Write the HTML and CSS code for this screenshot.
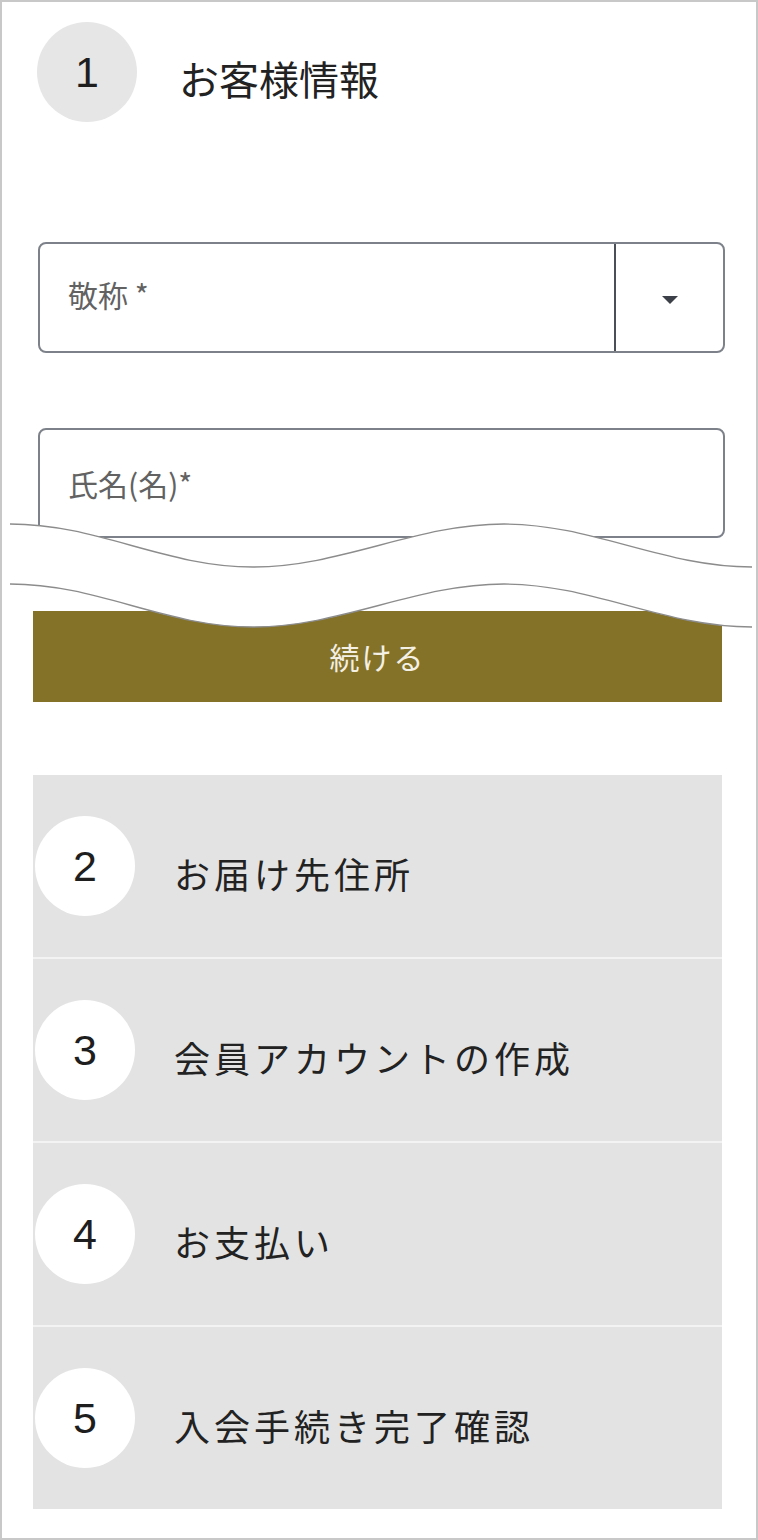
FILE: index.html
```html
<!DOCTYPE html>
<html lang="ja">
<head>
<meta charset="utf-8">
<title>お客様情報</title>
<link rel="stylesheet" href="styles.css">
</head>
<body>
<div class="frame">
  <div class="step-head">
    <div class="num num-current">1</div>
    <div class="step-title">お客様情報</div>
  </div>

  <form class="fields">
    <div class="field select">
      <span class="label">敬称 *</span>
      <span class="select-btn"><span class="caret"></span></span>
    </div>
    <div class="field input">
      <span class="label">氏名(名)*</span>
    </div>
  </form>

  <svg class="wave" width="758" height="140" viewBox="0 0 758 140" aria-hidden="true">
    <path d="M8 24 C96 24 163 67 251 67 C339 67 414 24 502 24 C590 24 661 67 750 67 L750 127 C661 127 590 84 502 84 C414 84 339 127 251 127 C163 127 96 84 8 84 Z" fill="#ffffff"/>
    <path d="M8 24 C96 24 163 67 251 67 C339 67 414 24 502 24 C590 24 661 67 750 67" fill="none" stroke="#8c8c8c" stroke-width="1.3"/>
    <path d="M8 84 C96 84 163 127 251 127 C339 127 414 84 502 84 C590 84 661 127 750 127" fill="none" stroke="#8c8c8c" stroke-width="1.3"/>
  </svg>

  <button class="continue" type="button">続ける</button>

  <ol class="steps">
    <li class="step"><span class="num">2</span><span class="step-name">お届け先住所</span></li>
    <li class="step"><span class="num">3</span><span class="step-name">会員アカウントの作成</span></li>
    <li class="step"><span class="num">4</span><span class="step-name">お支払い</span></li>
    <li class="step"><span class="num">5</span><span class="step-name">入会手続き完了確認</span></li>
  </ol>
</div>
</body>
</html>
```

FILE: styles.css
```css
* {
  box-sizing: border-box;
}

html, body {
  margin: 0;
  padding: 0;
  background: #ffffff;
}

body {
  font-family: "Noto Sans CJK JP", "Noto Sans", sans-serif;
  color: #222222;
}

.frame {
  position: relative;
  width: 758px;
  height: 1540px;
  border: 2px solid #c8c8c8;
  background: #ffffff;
  overflow: hidden;
}

/* step 1 header */
.step-head {
  display: flex;
  align-items: center;
  margin-top: 20px;
  padding-left: 35px;
}

.num {
  width: 100px;
  height: 100px;
  flex: 0 0 100px;
  border-radius: 50%;
  background: #ffffff;
  display: flex;
  align-items: center;
  justify-content: center;
  font-family: "Liberation Sans", Arial, sans-serif;
  font-size: 43px;
  line-height: 1;
  color: #1e1e1e;
}

.num-current {
  background: #e6e6e6;
}

.step-title {
  margin-left: 42px;
  padding-top: 12px;
  font-size: 40px;
  line-height: 1;
  color: #222222;
}

/* form fields */
.fields {
  margin: 120px 0 0 36px;
  width: 687px;
  display: flex;
  flex-direction: column;
  gap: 75px;
}

.field {
  display: flex;
  align-items: center;
  border: 2px solid #7d828a;
  border-radius: 8px;
  background: #ffffff;
}

.select {
  height: 111px;
}

.input {
  height: 110px;
}

.label {
  flex: 1;
  padding-left: 28px;
  font-size: 30px;
  line-height: 1;
  color: #626262;
}

.select .label {
  padding-bottom: 8px;
}

.select-btn {
  align-self: stretch;
  width: 109px;
  border-left: 2px solid #4b5058;
  display: flex;
  align-items: center;
  justify-content: center;
  padding-top: 4px;
}

.caret {
  width: 0;
  height: 0;
  border-left: 8px solid transparent;
  border-right: 8px solid transparent;
  border-top: 8px solid #3c4048;
}

/* torn-page overlay */
.wave {
  position: absolute;
  left: 0;
  top: 498px;
  display: block;
  z-index: 2;
}

/* continue button */
.continue {
  display: flex;
  align-items: center;
  justify-content: center;
  margin: 73px 0 0 31px;
  width: 689px;
  height: 91px;
  border: 0;
  padding: 0 0 2px 0;
  background: #847229;
  color: #f4f0e4;
  font-family: "Noto Sans CJK JP", sans-serif;
  font-size: 30px;
  letter-spacing: 2px;
  line-height: 1;
}

/* remaining steps */
.steps {
  list-style: none;
  margin: 73px 0 0 31px;
  padding: 0;
  width: 689px;
  display: flex;
  flex-direction: column;
  gap: 2px;
  background: #f3f3f3;
}

.step {
  display: flex;
  align-items: center;
  height: 182px;
  background: #e3e3e3;
  padding-left: 2px;
}

.step-name {
  margin-left: 39px;
  padding-top: 14px;
  font-size: 36px;
  letter-spacing: 4px;
  line-height: 1;
  color: #222222;
}
```
